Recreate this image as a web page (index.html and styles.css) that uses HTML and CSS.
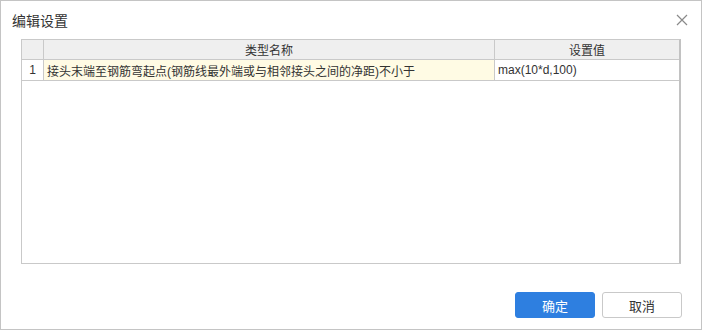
FILE: index.html
```html
<!DOCTYPE html>
<html lang="zh-CN">
<head>
  <meta charset="UTF-8" />
  <title>编辑设置</title>
  <link rel="stylesheet" href="styles.css">
</head>
<body>
  <div class="dialog">
    <div class="dialog-head">
      <span class="dialog-title">编辑设置</span>
      <svg class="close" width="12" height="12" viewBox="0 0 12 12">
        <path d="M1 1 L11 11 M11 1 L1 11" stroke="#8a8a8a" stroke-width="1.2" fill="none"/>
      </svg>
    </div>

    <div class="grid">
      <table>
        <thead>
          <tr>
            <th class="col-no"></th>
            <th class="col-name">类型名称</th>
            <th class="col-val">设置值</th>
          </tr>
        </thead>
        <tbody>
          <tr>
            <td class="col-no">1</td>
            <td class="col-name cell-ro">接头末端至钢筋弯起点(钢筋线最外端或与相邻接头之间的净距)不小于</td>
            <td class="col-val">max(10*d,100)</td>
          </tr>
        </tbody>
      </table>
    </div>

    <div class="dialog-foot">
      <button class="btn btn-primary">确定</button>
      <button class="btn">取消</button>
    </div>
  </div>
</body>
</html>
```

FILE: styles.css
```css
:root {
  --border: #c9c9c9;
  --head-bg: #efefef;
  --ro-bg: #fffbe4;
  --primary: #2e7fe0;
  --text: #333333;
}

body {
  margin: 0;
  font-family: "Liberation Sans", "Noto Sans CJK SC", sans-serif;
  color: var(--text);
}

.dialog {
  width: 702px;
  height: 330px;
  box-sizing: border-box;
  border: 1px solid #c4c4c4;
  background: #ffffff;
  display: flex;
  flex-direction: column;
}

.dialog-head {
  height: 38px;
  display: flex;
  align-items: center;
  justify-content: space-between;
  padding: 0 13px 0 11px;
}

.dialog-title {
  font-size: 14px;
  color: #333;
  margin-top: -1px;
}

.close {
  margin-top: -1px;
}

.grid {
  margin-left: 20px;
  width: 660px;
  height: 225px;
  box-sizing: border-box;
  border: 1px solid var(--border);
  border-right: 2px solid #c2c2c2;
}

table {
  border-collapse: collapse;
  width: 100%;
  font-size: 12px;
  table-layout: fixed;
}

th, td {
  border: 1px solid var(--border);
  padding: 0 3px;
  height: 19px;
  white-space: nowrap;
  overflow: hidden;
}

tr > :first-child {
  border-left: none;
}

tr > :last-child {
  border-right: none;
}

thead th {
  border-top: none;
  background: var(--head-bg);
  font-weight: normal;
  color: #333;
}

td {
  height: 20px;
}

.col-no {
  width: 15px;
  text-align: center;
}

th.col-name {
  width: 444px;
}

.cell-ro {
  background: var(--ro-bg);
}

.dialog-foot {
  margin-top: auto;
  display: flex;
  justify-content: flex-end;
  gap: 7px;
  padding: 0 19px 11px 0;
}

.btn {
  width: 80px;
  height: 26px;
  font-family: "Liberation Sans", "Noto Sans CJK SC", sans-serif;
  font-size: 13px;
  color: #333;
  background: #ffffff;
  border: 1px solid #c9c9c9;
  border-radius: 3px;
  padding: 0;
}

.btn-primary {
  background: var(--primary);
  border-color: var(--primary);
  color: #ffffff;
}
```
